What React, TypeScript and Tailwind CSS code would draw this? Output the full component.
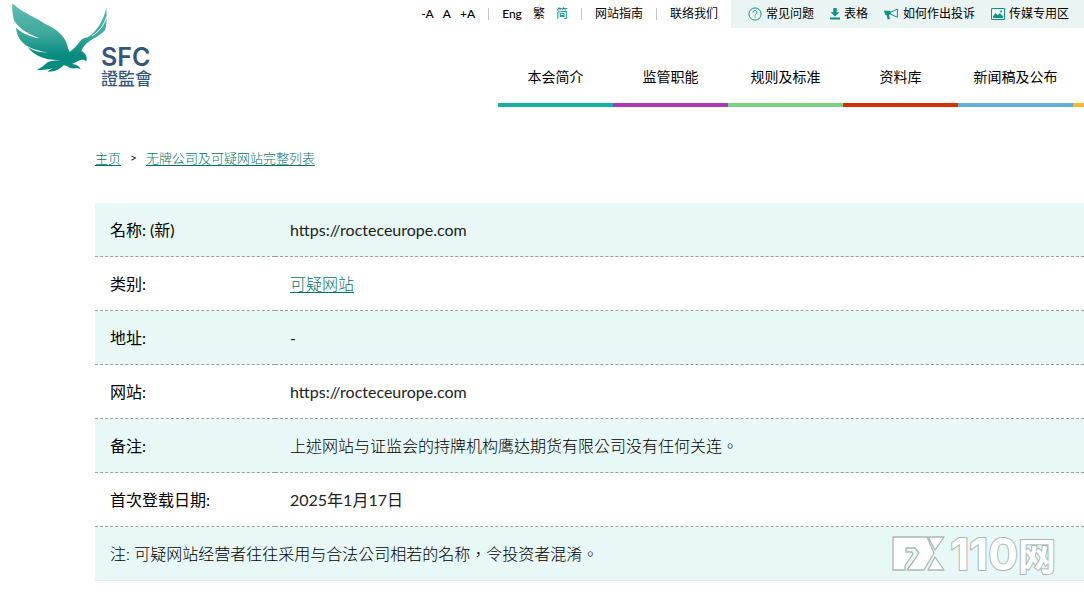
import type { ReactNode } from "react";

const navItems = [
  { label: "本会简介", color: "border-[#14b1a4]" },
  { label: "监管职能", color: "border-[#ae38b4]" },
  { label: "规则及标准", color: "border-[#7ed087]" },
  { label: "资料库", color: "border-[#d23200]" },
  { label: "新闻稿及公布", color: "border-[#65acd6]" },
];

type RowProps = {
  label: string;
  shaded?: boolean;
  children: ReactNode;
};

function Row({ label, shaded, children }: RowProps) {
  return (
    <tr className={shaded ? "bg-[#e7f8f6]" : "bg-white"}>
      <th
        scope="row"
        className="h-[54px] w-[180px] border-b border-dashed border-[#9d9d9d] px-[15px] text-left font-normal whitespace-nowrap text-black"
      >
        {label}
      </th>
      <td className="h-[54px] border-b border-dashed border-[#9d9d9d] px-[15px]">{children}</td>
    </tr>
  );
}

function Logo() {
  return (
    <span className="flex items-end pl-[10px] text-[#35567b]">
      <svg viewBox="30 0 300 228" className="h-[76px] w-[100px]" aria-hidden="true">
        <defs>
          <linearGradient id="bird" x1="0" y1="0" x2="0" y2="1">
            <stop offset="0" stopColor="#62bcb2" />
            <stop offset="0.45" stopColor="#3fa89c" />
            <stop offset="0.75" stopColor="#088c80" />
            <stop offset="1" stopColor="#098a7e" />
          </linearGradient>
        </defs>
        <path
          fill="url(#bird)"
          d="M37 10C62 36 100 48 136 72C172 86 196 112 202 136C204 144 206 150 209 155C221 148 228 140 236 129C243 118 252 113 264 112C292 92 310 62 319 24C321 50 321 74 315 91C300 106 286 114 270 122C257 130 248 142 244 153C256 158 263 170 259 184C254 180 249 178 242 180C232 184 225 188 216 192C229 193 238 198 242 207C229 202 222 208 209 203C203 199 198 196 191 196C175 212 160 216 142 215L158 204C140 210 126 211 110 209C127 203 133 194 144 186C157 180 171 182 187 179C150 184 104 172 83 141C103 154 122 158 142 157C96 149 52 134 48 83C64 98 90 110 118 115C90 104 62 90 43 64C38 48 36 30 37 10Z"
        />
        <path fill="none" stroke="#fff" strokeWidth="3" d="M276 108C297 95 312 76 320 50" />
      </svg>
      <span className="-mb-3 -ml-[9px] flex flex-col">
        <span className="font-[Inter,sans-serif] text-[25px] leading-[22px] font-semibold">SFC</span>
        <span className="font-['Noto_Sans_CJK_TC',sans-serif] text-[17px] leading-[20px] font-medium">證監會</span>
      </span>
    </span>
  );
}

function Divider() {
  return <span className="h-3 w-px bg-[#c4c4c4]" />;
}

function HelpIcon() {
  return (
    <svg viewBox="0 0 14 14" className="size-[14px]" fill="none" stroke="#119186" aria-hidden="true">
      <circle cx="7" cy="7" r="6.1" />
      <path d="M5 5.6C5 4.2 5.8 3.6 7 3.6s2 .7 2 1.8c0 1.4-2 1.5-2 3.1M7 9.4v1.2" />
    </svg>
  );
}

function DownloadIcon() {
  return (
    <svg viewBox="0 0 10 12" className="h-3 w-[10px]" fill="#119186" aria-hidden="true">
      <path d="M3.3 0h3.4v4.2H9.4L5 8.6.6 4.2h2.7zM0 9.6h10v1.9H0z" />
    </svg>
  );
}

function HornIcon() {
  return (
    <svg viewBox="0 0 15 12" className="h-3 w-[15px]" aria-hidden="true">
      <path fill="#119186" d="M0 2.4 6.5 3v3.6l-1.5.2.9 4.1-2.3.5L2.6 7.2 1 6.6z" />
      <path fill="none" stroke="#119186" d="M6.5 4.4 13.4 1v8.2L6.5 6.2z" />
    </svg>
  );
}

function ImageIcon() {
  return (
    <svg viewBox="0 0 14 12" className="h-3 w-[14px]" aria-hidden="true">
      <path fill="none" stroke="#119186" d="M.5.5h13v11H.5z" />
      <path fill="#119186" d="M2 10V8.3l2.7-3.3 1.8 2.2 2.4-2L12 8.3V10z" />
      <circle cx="10" cy="3.4" r="1" fill="#119186" />
    </svg>
  );
}

function Watermark() {
  return (
    <div className="absolute right-7 bottom-1 flex items-center text-white">
      <svg
        viewBox="0 0 54 38"
        className="mr-1 h-[38px] w-[54px]"
        fill="#fff"
        stroke="#a9b7b5"
        strokeWidth="1.3"
        strokeLinejoin="round"
        role="img"
        aria-label="FX"
      >
        <path d="M1 2h34l7 16-10 17H15l8-11 4-6-4-5h-9v4h6l1 2-8 12v4H1z" />
        <path d="M36 2h16l-9 13zM43 22l9 13H36z" />
      </svg>
      <span className="font-[Inter,sans-serif] text-[44px] leading-[46px] font-bold [-webkit-text-stroke:2px_#a9b7b5] [paint-order:stroke_fill]">
        110
      </span>
      <span className="font-['Noto_Sans_CJK_SC',sans-serif] text-[38px] leading-[46px] font-bold [-webkit-text-stroke:2px_#a9b7b5] [paint-order:stroke_fill]">
        网
      </span>
    </div>
  );
}

export default function App() {
  return (
    <div className="min-h-screen overflow-x-hidden bg-white font-[Lato,'Noto_Sans_CJK_SC',sans-serif] text-[#222]">
      <header className="flex items-start justify-between">
        <a href="#home">
          <Logo />
        </a>
        <div className="flex flex-col items-end">
          <div className="flex h-7 items-center text-xs whitespace-nowrap text-black">
            <div className="flex items-center gap-[13px] pr-[13px]">
              <div className="flex gap-[9px] font-medium">
                <button type="button">-A</button>
                <button type="button">A</button>
                <button type="button">+A</button>
              </div>
              <Divider />
              <div className="flex gap-[11px]">
                <a href="#en" className="font-medium">Eng</a>
                <a href="#tc">繁</a>
                <a href="#sc" className="text-[#00857a]">简</a>
              </div>
              <Divider />
              <a href="#sitemap">网站指南</a>
              <Divider />
              <a href="#contact">联络我们</a>
            </div>
            <div className="flex h-7 items-center gap-4 bg-[#e9f4f3] pr-[15px] pl-[17px]">
              <a href="#faq" className="flex items-center gap-1"><HelpIcon />常见问题</a>
              <a href="#forms" className="flex items-center gap-1"><DownloadIcon />表格</a>
              <a href="#complaint" className="flex items-center gap-1"><HornIcon />如何作出投诉</a>
              <a href="#media" className="flex items-center gap-1"><ImageIcon />传媒专用区</a>
            </div>
          </div>
          <nav className="mt-[22px] flex text-sm text-black">
            {navItems.map((item) => (
              <a
                key={item.label}
                href="#nav"
                className={`flex h-[57px] w-[115px] justify-center border-b-4 pt-[17px] ${item.color}`}
              >
                {item.label}
              </a>
            ))}
            <span className="w-[11px] border-b-4 border-[#fdb827]" />
          </nav>
        </div>
      </header>

      <main className="pl-[95px]">
        <nav className="mt-[41px] flex h-5 items-center gap-[9px] text-[13px] leading-5 font-light">
          <a href="#home" className="text-[#00756b] underline underline-offset-2">主页</a>
          <span className="text-xs font-normal">&gt;</span>
          <a href="#list" className="text-[#00756b] underline underline-offset-2">无牌公司及可疑网站完整列表</a>
        </nav>

        <div className="relative mt-[35px] font-[Lato,'Noto_Sans_CJK_TC',sans-serif]">
          <table className="w-full border-separate border-spacing-0 text-base leading-6">
            <tbody>
              <Row label="名称: (新)" shaded>https://rocteceurope.com</Row>
              <Row label="类别:">
                <a href="#type" className="font-light text-[#00756b] underline underline-offset-2">可疑网站</a>
              </Row>
              <Row label="地址:" shaded>-</Row>
              <Row label="网站:">https://rocteceurope.com</Row>
              <Row label="备注:" shaded>
                <span className="font-light text-black">上述网站与证监会的持牌机构鹰达期货有限公司没有任何关连。</span>
              </Row>
              <Row label="首次登载日期:">2025年1月17日</Row>
              <tr className="bg-[#e7f8f6]">
                <td colSpan={2} className="h-[54px] border-b border-[#e8e8e8] px-[15px] font-light text-black">
                  注: 可疑网站经营者往往采用与合法公司相若的名称，令投资者混淆。
                </td>
              </tr>
            </tbody>
          </table>
          <Watermark />
        </div>
      </main>
    </div>
  );
}
